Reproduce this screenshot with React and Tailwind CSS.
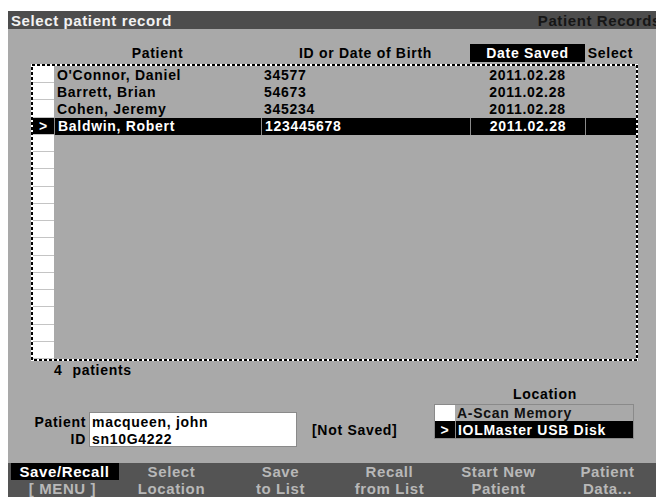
const FONT = { fontFamily: '"Liberation Sans", Arial, sans-serif' };

const patients = [
  { name: "O'Connor, Daniel", id: "34577", date: "2011.02.28" },
  { name: "Barrett, Brian", id: "54673", date: "2011.02.28" },
  { name: "Cohen, Jeremy", id: "345234", date: "2011.02.28" },
  { name: "Baldwin, Robert", id: "123445678", date: "2011.02.28", selected: true },
];

const softkeys = [
  ["Save/Recall", "[ MENU ]"],
  ["Select", "Location"],
  ["Save", "to List"],
  ["Recall", "from List"],
  ["Start New", "Patient"],
  ["Patient", "Data..."],
];

function RecordRow({ p }) {
  const sel = p && p.selected;
  if (sel) {
    return (
      <div className="grid grid-cols-[21px_207px_209px_115px_51px] bg-black text-white">
        <div className="flex items-center justify-center border-b border-[#c4c4c4]">&gt;</div>
        <div className="flex items-center pl-[3px] border-l border-[#8a8a8a]">{p.name}</div>
        <div className="flex items-center pl-[3px] border-l border-[#8a8a8a]">{p.id}</div>
        <div className="flex items-center justify-center border-l border-[#8a8a8a]">{p.date}</div>
        <div className="border-l border-[#8a8a8a]" />
      </div>
    );
  }
  return (
    <div className="grid grid-cols-[21px_207px_209px_115px_51px] text-black">
      <div className="bg-white border-b border-[#c4c4c4]" />
      <div className="flex items-center pl-[3px]">{p ? p.name : ""}</div>
      <div className="flex items-center pl-[3px]">{p ? p.id : ""}</div>
      <div className="flex items-center justify-center">{p ? p.date : ""}</div>
      <div />
    </div>
  );
}

export default function App() {
  const rows = Array.from({ length: 17 }, (_, i) => patients[i] || null);

  return (
    <div
      className="w-[656px] h-[497px] overflow-hidden bg-white pt-[11px] pl-[8px]"
      style={FONT}
    >
      <div className="w-[654px] h-[486px] flex flex-col bg-[#a9a9a9] font-bold text-[14px] tracking-[0.7px] leading-none">
        {/* title bar */}
        <div className="h-[18px] shrink-0 flex items-center justify-between bg-[#4d4d4d] pl-[3px] pr-[1px] text-[15px] tracking-[0.6px]">
          <span className="text-[#f2f2f2]">Select patient record</span>
          <span className="text-[#161616]">Patient Records</span>
        </div>

        {/* record list */}
        <div className="flex-1 pl-[23px]">
          <div className="mt-[15px] ml-[2px] h-[18px] grid grid-cols-[21px_207px_209px_115px_51px] text-black">
            <div />
            <div className="flex items-center justify-center">Patient</div>
            <div className="flex items-center justify-center">ID or Date of Birth</div>
            <div className="flex items-center justify-center bg-black text-white">Date Saved</div>
            <div className="flex items-center justify-center">Select</div>
          </div>

          <div className="relative mt-[2px] w-[607px] h-[297px] p-[2px] bg-white">
            <div className="h-full bg-[#a9a9a9] grid grid-rows-[repeat(17,minmax(0,1fr))]">
              {rows.map((p, i) => (
                <RecordRow key={i} p={p} />
              ))}
            </div>
            <svg className="absolute inset-0 pointer-events-none" width="607" height="297">
              <rect x="1" y="1" width="605" height="295" fill="none" stroke="#000" strokeWidth="2" strokeDasharray="3 2" />
            </svg>
          </div>

          <div className="h-[17px] flex items-center pl-[23px] text-black">
            <span>4</span>
            <span className="ml-[10px]">patients</span>
          </div>

          {/* patient entry + location */}
          <div className="h-[85px] flex items-start text-black">
            <div className="mt-[34px] flex">
              <div className="w-[55px] pt-[1px] flex flex-col items-end">
                <div className="h-[17px] flex items-center">Patient</div>
                <div className="h-[17px] flex items-center">ID</div>
              </div>
              <div className="ml-[3px] w-[208px] h-[35px] bg-white border border-[#8a8a8a] pl-[2px]">
                <div className="h-[17px] flex items-center">macqueen, john</div>
                <div className="h-[17px] flex items-center">sn10G4222</div>
              </div>
            </div>
            <div className="mt-[43px] ml-[15px] h-[17px] flex items-center">[Not Saved]</div>

            <div className="ml-auto mr-[28px] mt-[7px] w-[200px]">
              <div className="h-[17px] flex items-center justify-center pl-[22px]">Location</div>
              <div className="mt-[2px] border border-[#8a8a8a]">
                <div className="h-[16px] flex">
                  <div className="w-[20px] bg-white" />
                  <div className="flex items-center pl-[2px] text-[#111]">A-Scan Memory</div>
                </div>
                <div className="h-[17px] flex bg-black text-white">
                  <div className="w-[20px] flex items-center justify-center">&gt;</div>
                  <div className="flex items-center pl-[2px] border-l border-[#8a8a8a]">IOLMaster USB Disk</div>
                </div>
              </div>
            </div>
          </div>
        </div>

        {/* soft keys */}
        <div className="h-[34px] shrink-0 grid grid-cols-6 bg-[#545454] text-[#b8b8b8] text-[15px] tracking-[0.6px]">
          {softkeys.map(([a, b], i) => (
            <div key={i} className="flex flex-col items-center">
              <div
                className={
                  i === 0
                    ? "h-[17px] w-[108px] ml-[4px] flex items-center justify-center bg-black text-white"
                    : "h-[17px] flex items-center"
                }
              >
                {a}
              </div>
              <div className="h-[17px] flex items-center">{b}</div>
            </div>
          ))}
        </div>
      </div>
    </div>
  );
}
